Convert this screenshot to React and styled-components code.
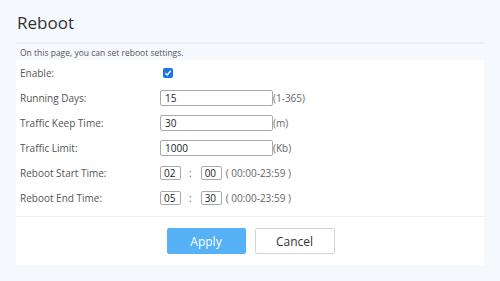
import React from 'react';
import styled, { createGlobalStyle } from 'styled-components';

const GlobalStyle = createGlobalStyle`
  html, body {
    margin: 0;
    padding: 0;
    background: #f5f8fc;
    font-family: 'Open Sans', 'Liberation Sans', sans-serif;
  }
`;

const Page = styled.div`
  width: 500px;
  height: 281px;
  padding: 0 16px;
  box-sizing: border-box;
`;

const Header = styled.div`
  height: 44px;
  border-bottom: 2px solid #ebeff5;
  display: flex;
  align-items: center;
  padding-left: 1px;
  padding-top: 3px;
  box-sizing: border-box;
  h1 {
    margin: 0;
    font-size: 17px;
    font-weight: 400;
    color: #333;
  }
`;

const Note = styled.div`
  height: 16px;
  padding-left: 4px;
  display: flex;
  align-items: center;
  font-size: 8.5px;
  color: #555;
`;

const Card = styled.div`
  background: #fff;
`;

const Form = styled.div`
  border-bottom: 1px solid #eceff3;
  padding-bottom: 6px;
`;

const Row = styled.div`
  height: 25px;
  display: flex;
  align-items: center;
  padding-left: 4px;
  font-size: 10px;
  color: #555;
`;

const Label = styled.div`
  width: 140px;
  flex-shrink: 0;
`;

const Value = styled.div`
  display: flex;
  align-items: center;
`;

const TextInput = styled.input`
  width: ${p => (p.$small ? '21px' : '113px')};
  height: ${p => (p.$small ? '14px' : '16px')};
  box-sizing: border-box;
  border: 1px solid #a9a9a9;
  border-radius: 2px;
  padding: ${p => (p.$small ? '0 0 0 3px' : '0 0 0 4px')};
  font-family: inherit;
  font-size: 10px;
  color: #222;
  outline: none;
`;

const Hint = styled.span`
  color: #666;
  font-size: 10px;
  margin-left: ${p => p.$gap || 0}px;
`;

const Colon = styled.span`
  color: #555;
  margin: 0 9px 0 8px;
`;

const Check = styled.span`
  width: 10px;
  height: 10px;
  margin-left: 3px;
  background: #1a73e8;
  border-radius: 2px;
  display: flex;
  align-items: center;
  justify-content: center;
`;

const Footer = styled.div`
  display: flex;
  justify-content: center;
  gap: 9px;
  padding: 11px 0 11px 1px;
`;

const Button = styled.button`
  width: ${p => (p.$primary ? '79px' : '80px')};
  height: 26px;
  border-radius: 2px;
  font-family: inherit;
  font-size: 12px;
  border: 1px solid ${p => (p.$primary ? '#56b1f7' : '#d0d3d8')};
  background: ${p => (p.$primary ? '#56b1f7' : '#fff')};
  color: ${p => (p.$primary ? '#fff' : '#333')};
`;

const fields = [
  { label: 'Running Days:', value: '15', hint: '(1-365)' },
  { label: 'Traffic Keep Time:', value: '30', hint: '(m)' },
  { label: 'Traffic Limit:', value: '1000', hint: '(Kb)' },
];

const times = [
  { label: 'Reboot Start Time:', h: '02', m: '00' },
  { label: 'Reboot End Time:', h: '05', m: '30' },
];

export default function App() {
  return (
    <Page>
      <GlobalStyle />
      <Header>
        <h1>Reboot</h1>
      </Header>
      <Note>On this page, you can set reboot settings.</Note>
      <Card>
        <Form>
          <Row>
            <Label>Enable:</Label>
            <Value>
              <Check>
                <svg width="8" height="8" viewBox="0 0 8 8">
                  <path d="M1.3 4.2 L3.2 6 L6.8 1.8" fill="none" stroke="#fff" strokeWidth="1.4" />
                </svg>
              </Check>
            </Value>
          </Row>
          {fields.map(f => (
            <Row key={f.label}>
              <Label>{f.label}</Label>
              <Value>
                <TextInput defaultValue={f.value} />
                <Hint>{f.hint}</Hint>
              </Value>
            </Row>
          ))}
          {times.map(t => (
            <Row key={t.label}>
              <Label>{t.label}</Label>
              <Value>
                <TextInput $small defaultValue={t.h} />
                <Colon>:</Colon>
                <TextInput $small defaultValue={t.m} />
                <Hint $gap={4}>( 00:00-23:59 )</Hint>
              </Value>
            </Row>
          ))}
        </Form>
        <Footer>
          <Button $primary>Apply</Button>
          <Button>Cancel</Button>
        </Footer>
      </Card>
    </Page>
  );
}
